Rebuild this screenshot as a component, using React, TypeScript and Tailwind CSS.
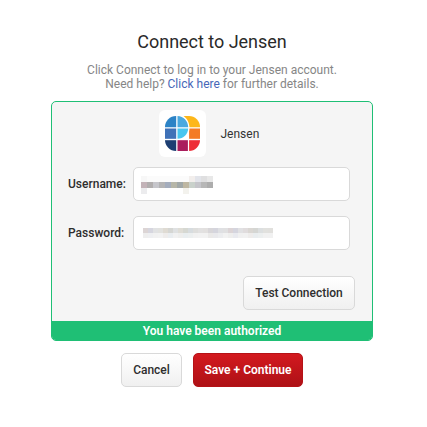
import { useState } from 'react';

const USERNAME_MASK = [
    ['#f7f7f7', '#fbfbfb', '#fbfbfb', '#fbfbfb', '#fbfbfb', '#fbfbfb', '#fbfbfb', '#fbfbfb', '#f2eeec', '#e2e4ea', '#dfdfe0', '#e8e8e8'],
    ['#c3b3b8', '#b1aeae', '#c6c6cb', '#b4b4b5', '#a4adbd', '#b6b6a8', '#a1a8a8', '#beb7a2', '#c9d1cb', '#c5c5ca', '#b7b7b7', '#adadad'],
    ['#ececee', '#fff', '#fff', '#fff', '#fff', '#fff', '#fff', '#f3f2ed', '#fff', '#fff', '#fff', '#fff'],
];

const PASSWORD_MASK = [
    ['#dcd5d5', '#d6d6df', '#e1e2e3', '#e2e2df', '#dfdbd3', '#d5d6d3', '#dfe1e2', '#dfddd6', '#d6d8d2', '#d7dcdf', '#dededc', '#e2e1e1', '#e2e0df', '#d8d6d9', '#d5d5dd', '#dfe0e3', '#e0e0e1', '#dcd4d6', '#d5d5de', '#e1e1e3', '#e0dcdd', '#dad7d3', '#d5d6d3', '#dcdfe0', '#e1e1de', '#e1e0dd'],
    ['#eeeeee', '#eeeff1', '#f1f1f1', '#f2f2f2', '#eeeceb', '#e9edf0', '#f1f1f1', '#eeeeed', '#e9eef0', '#ecefef', '#f1f1f1', '#f2f2f2', '#f2f2f2', '#eae9e8', '#e9e9ec', '#ecedef', '#f2f2f2', '#eeeeed', '#e9eaef', '#f0f0f0', '#f1f1f1', '#eeeceb', '#e9edef', '#ecefef', '#f1f1f1', '#f1f1f1'],
];

function JensenLogo() {
    return (
        <svg width="35" height="35" viewBox="0 0 35 35">
            <defs>
                <clipPath id="logo-shape">
                    <rect width="35" height="35" rx="11" />
                </clipPath>
            </defs>
            <g clipPath="url(#logo-shape)">
                <path d="M18 0h17v11.2H24Z" fill="#fdb71a" />
                <rect x="24.1" y="12.5" width="10.9" height="10.3" fill="#f47b25" />
                <rect x="0" y="24.2" width="11.2" height="10.8" fill="#1d3e72" />
                <rect x="12.5" y="24.2" width="10.4" height="10.8" fill="#aa1e5d" />
                <rect x="24.1" y="24.2" width="10.9" height="10.8" fill="#ee2d37" />
                {/* the P sits over the yellow corner */}
                <path d="M12 -1.5h1C20 -1.5 24.4 5 24.4 11.8S21 23.9 12 23.9Z" fill="#fff" />
                <path d="M0 0h11.2v11.2H0Z" fill="#2c83c6" />
                <path d="M12.5 0C18.5 0 23 5 23.2 11.2H12.5Z" fill="#4aa9df" />
                <rect x="0" y="12.5" width="11.2" height="10.3" fill="#3f71b7" />
                <path d="M12.5 12.5h10.7C23 18.3 18.5 22.6 12.5 22.8Z" fill="#48c6ef" />
            </g>
        </svg>
    );
}

function UsernameMask() {
    return (
        <div>
            {USERNAME_MASK.map((row, i) => (
                <div key={i} className="flex">
                    {row.map((color, j) => (
                        <span key={j} className="size-[6px]" style={{ backgroundColor: color }} />
                    ))}
                </div>
            ))}
        </div>
    );
}

function PasswordMask() {
    return (
        <div>
            {PASSWORD_MASK.map((row, i) => (
                <div key={i} className="flex">
                    {row.map((color, j) => (
                        <span key={j} className="size-[5px]" style={{ backgroundColor: color }} />
                    ))}
                </div>
            ))}
        </div>
    );
}

function App() {
    const [authorized, setAuthorized] = useState(true);

    return (
        <div className="w-[427px] h-[427px] bg-white overflow-hidden font-[Roboto,sans-serif] text-[#222] pl-[51px]">
            <div className="w-[322px]">
                <h2 className="pt-[30px] text-center text-[18px] leading-6 tracking-[-0.03px] text-[#2a2a2a]">Connect to Jensen</h2>
                <p className="mt-[9px] h-[38px] text-center text-[12px] leading-[14px] text-[#868686]">
                    Click Connect to log in to your Jensen account.
                    <br />
                    Need help? <a href="#" className="text-[#4767b8]">Click here</a> for further details.
                </p>

                <div className="h-[240px] flex flex-col rounded-[5px] border border-[#1fbf75] bg-[#f5f5f5] overflow-hidden">
                    <div className="flex items-center pl-[107px] pt-2">
                        <div className="size-[47px] rounded-[6px] bg-white flex items-center justify-center">
                            <JensenLogo />
                        </div>
                        <span className="ml-[14.5px] text-[12px] text-[#333]">Jensen</span>
                    </div>

                    <div className="mt-[10px] flex items-center">
                        <label className="w-[81px] pl-4 text-[12px] font-medium text-[#2e2e2e]">Username:</label>
                        <div className="w-[217px] h-[34px] rounded-[5px] border border-[#d9d9d9] bg-white flex items-center pl-[7px] pt-[2px]">
                            <UsernameMask />
                        </div>
                    </div>
                    <div className="mt-[15px] flex items-center">
                        <label className="w-[81px] pl-4 text-[12px] font-medium text-[#2e2e2e]">Password:</label>
                        <div className="w-[217px] h-[34px] rounded-[5px] border border-[#d9d9d9] bg-white flex items-center pl-[9px]">
                            <PasswordMask />
                        </div>
                    </div>

                    <div className="mt-[26px] pr-[17px] flex justify-end">
                        <button
                            onClick={() => setAuthorized(true)}
                            className="w-[112px] h-[34px] rounded-[5px] border border-[#d9d9d9] bg-linear-to-b from-white to-[#f0f0f0] text-[12px] font-medium text-[#2e2e2e]"
                        >
                            Test Connection
                        </button>
                    </div>

                    {authorized && (
                        <div className="mt-auto h-[19px] bg-[#1fbf75] text-center text-[12px] leading-[20px] font-semibold text-white">
                            You have been authorized
                        </div>
                    )}
                </div>

                <div className="mt-3 flex justify-center gap-[11px]">
                    <button
                        onClick={() => setAuthorized(false)}
                        className="w-[61px] h-[34px] rounded-[5px] border border-[#d9d9d9] bg-linear-to-b from-white to-[#f0f0f0] text-[12px] font-medium text-[#2e2e2e]"
                    >
                        Cancel
                    </button>
                    <button className="w-[110px] h-[34px] rounded-[5px] border border-[#b51217] bg-linear-to-b from-[#d3191f] to-[#ae1116] text-[12px] font-semibold text-white">
                        Save + Continue
                    </button>
                </div>
            </div>
        </div>
    );
}

export default App;
